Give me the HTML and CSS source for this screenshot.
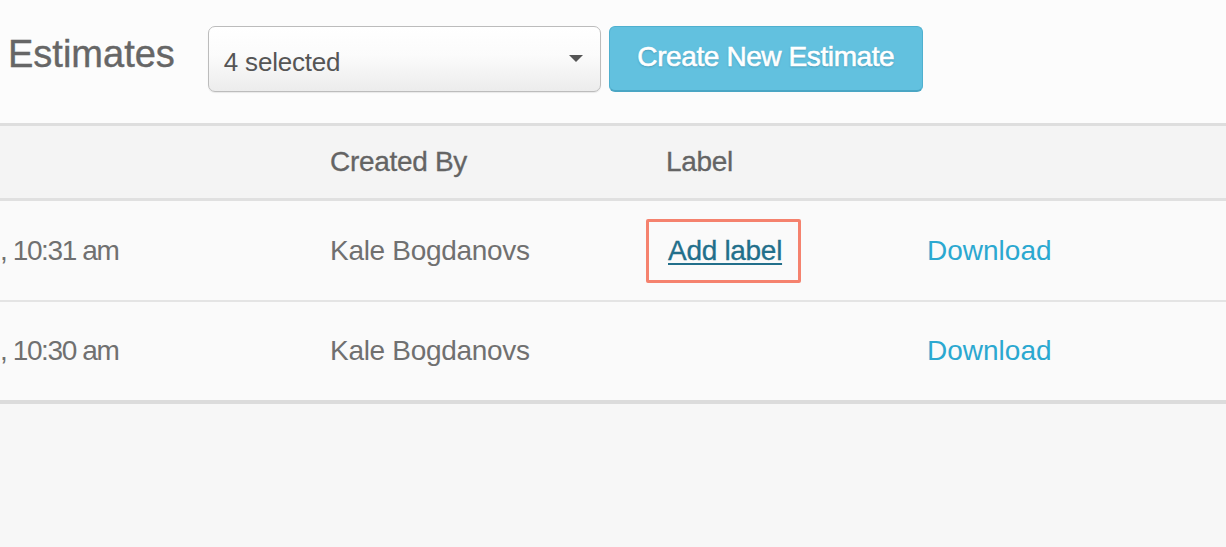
FILE: index.html
```html
<!DOCTYPE html>
<html lang="en">
<head>
<meta charset="utf-8">
<title>Estimates</title>
<link rel="stylesheet" href="styles.css">
</head>
<body>
<div class="page">
  <header class="toolbar">
    <h1 class="title">Estimates</h1>
    <div class="select">
      <span class="select-text">4 selected</span>
      <span class="caret"></span>
    </div>
    <button class="btn-primary">Create New Estimate</button>
  </header>
  <div class="table">
    <div class="row head">
      <div class="cell"></div>
      <div class="cell">Created By</div>
      <div class="cell">Label</div>
      <div class="cell"></div>
    </div>
    <div class="row body">
      <div class="cell time">, 10:31 am</div>
      <div class="cell">Kale Bogdanovs</div>
      <div class="cell"><a class="label-link highlighted" href="#">Add label</a></div>
      <div class="cell"><a class="download" href="#">Download</a></div>
    </div>
    <div class="row body last">
      <div class="cell time">, 10:30 am</div>
      <div class="cell">Kale Bogdanovs</div>
      <div class="cell"></div>
      <div class="cell"><a class="download" href="#">Download</a></div>
    </div>
  </div>
</div>
</body>
</html>
```

FILE: styles.css
```css
html, body {
  margin: 0;
  padding: 0;
  background: #f7f7f7;
  font-family: "Liberation Sans", Arial, sans-serif;
  color: #6b6b6b;
}

.page {
  width: 1226px;
  height: 547px;
  overflow: hidden;
}

.toolbar {
  display: flex;
  align-items: center;
  height: 123px;
  box-sizing: border-box;
  padding: 0 0 5px 8px;
  background: #fcfcfc;
}

.title {
  margin: 0 33px 10px 0;
  font-size: 38px;
  line-height: 38px;
  font-weight: normal;
  color: #666;
  letter-spacing: 0;
  -webkit-text-stroke: 0.4px #666;
}

.select {
  display: flex;
  align-items: center;
  justify-content: space-between;
  width: 393px;
  height: 66px;
  box-sizing: border-box;
  padding: 6px 17px 0 15px;
  border: 1.5px solid #bcbcbc;
  border-radius: 7px;
  background: linear-gradient(#ffffff 0%, #fbfbfb 45%, #ececec 100%);
  box-shadow: 0 1px 1px rgba(0, 0, 0, 0.08);
}

.select-text {
  font-size: 26px;
  color: #555;
  letter-spacing: -0.2px;
}

.caret {
  width: 0;
  height: 0;
  margin-top: -8px;
  border-left: 7px solid transparent;
  border-right: 7px solid transparent;
  border-top: 7px solid #555;
}

.btn-primary {
  margin-left: 8px;
  width: 314px;
  height: 66px;
  box-sizing: border-box;
  border: 1px solid #4fb0cf;
  border-bottom: 2px solid #4aa6c4;
  border-radius: 6px;
  background: #62c1df;
  color: #fff;
  font-family: "Liberation Sans", Arial, sans-serif;
  font-size: 28px;
  letter-spacing: -0.4px;
  padding: 0 0 4px;
  text-shadow: 0 1px 2px rgba(0, 60, 90, 0.35);
  -webkit-text-stroke: 0.6px #fff;
}

.table {
  border-top: 3px solid #dedede;
}

.row {
  display: grid;
  grid-template-columns: 330px 336px 261px 1fr;
  align-items: center;
  font-size: 28px;
  letter-spacing: -0.3px;
}

.row.head {
  height: 72px;
  background: #f4f4f4;
  border-bottom: 3px solid #e0e0e0;
  color: #646464;
  -webkit-text-stroke: 0.3px #646464;
}

.row.body {
  height: 99px;
  background: #fafafa;
  border-bottom: 2px solid #e4e4e4;
  color: #707070;
}

.row.body.last {
  height: 98px;
  border-bottom: 4px solid #dcdcdc;
}

.cell {
  white-space: nowrap;
}

.cell.time {
  letter-spacing: -1.4px;
}

.label-link {
  position: relative;
  display: inline-block;
  margin-left: 2px;
  color: #226f8b;
  text-decoration: underline;
  text-decoration-thickness: 2px;
  text-underline-offset: 3px;
  -webkit-text-stroke: 0.3px #226f8b;
}

.highlighted::after {
  content: "";
  position: absolute;
  top: -16px;
  bottom: -16px;
  left: -22px;
  right: -19px;
  border: 3.5px solid #f5826e;
  border-radius: 2px;
}

.download {
  color: #2ba8d0;
  text-decoration: none;
  letter-spacing: 0;
}
```
